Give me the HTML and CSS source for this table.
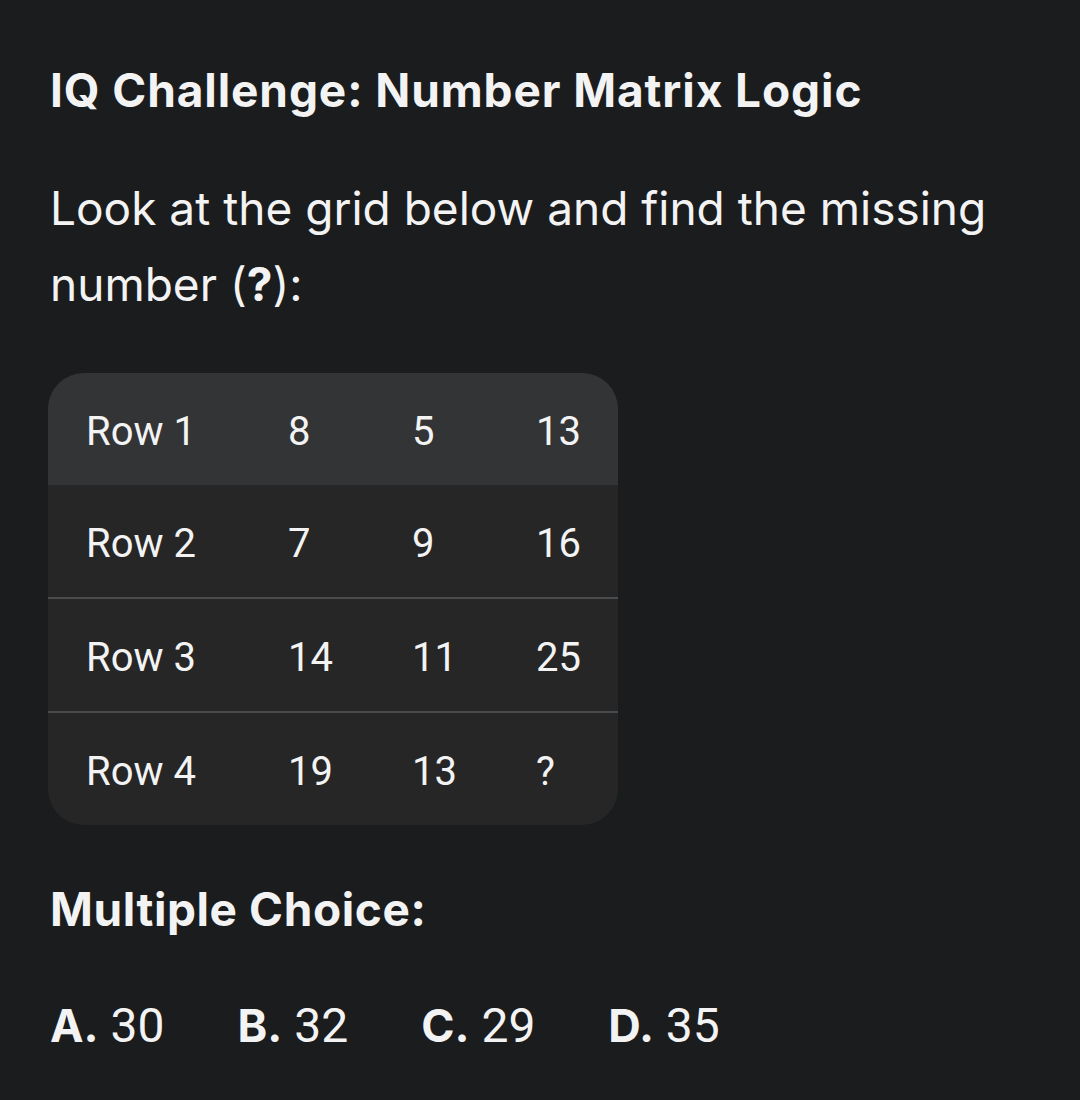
FILE: index.html
```html
<!DOCTYPE html>
<html lang="en">
<head>
  <meta charset="UTF-8" />
  <title>IQ Challenge</title>
  <link rel="stylesheet" href="styles.css">
</head>
<body>

  <h1>IQ Challenge: Number Matrix Logic</h1>

  <p class="intro">Look at the grid below and find the missing number (<strong>?</strong>):</p>

  <div class="grid-wrap">
    <table class="grid">
      <colgroup>
        <col class="c-label">
        <col class="c-num">
        <col class="c-num">
        <col>
      </colgroup>
      <thead>
        <tr><td>Row 1</td><td>8</td><td>5</td><td>13</td></tr>
      </thead>
      <tbody>
        <tr><td>Row 2</td><td>7</td><td>9</td><td>16</td></tr>
        <tr><td>Row 3</td><td>14</td><td>11</td><td>25</td></tr>
        <tr><td>Row 4</td><td>19</td><td>13</td><td>?</td></tr>
      </tbody>
    </table>
  </div>

  <h2>Multiple Choice:</h2>

  <div class="choices">
    <span><b>A.</b> 30</span>
    <span><b>B.</b> 32</span>
    <span><b>C.</b> 29</span>
    <span><b>D.</b> 35</span>
  </div>

</body>
</html>
```

FILE: styles.css
```css
body {
  font-family: Inter, 'Noto Sans', sans-serif;
  margin: 0;
  padding: 58px 50px 0 50px;
  background: #1b1c1e;
  color: #f3f3f3;
}

h1 {
  font-size: 46px;
  font-weight: 700;
  margin: 0 0 48px;
  line-height: 64px;
  letter-spacing: 0.9px;
}

.intro {
  font-size: 46px;
  line-height: 76px;
  margin: 0 0 51px;
  max-width: 980px;
}

.intro strong {
  font-weight: 700;
}

.grid-wrap {
  display: inline-block;
  margin-left: -2px;
  border-radius: 36px;
  overflow: hidden;
  background: #262627;
}

.grid {
  border-collapse: collapse;
  table-layout: fixed;
  width: 570px;
  font-family: Roboto, sans-serif;
  font-size: 40px;
}

.grid .c-label {
  width: 202px;
}

.grid .c-num {
  width: 124px;
}

.grid td {
  height: 106px;
  padding: 6px 0 0 38px;
  vertical-align: middle;
  line-height: 1;
  white-space: nowrap;
}

.grid thead tr {
  background: #333436;
}

.grid tbody tr + tr {
  border-top: 2px solid #4a4b4c;
}

h2 {
  font-size: 46px;
  font-weight: 700;
  margin: 48px 0 0;
  line-height: 64px;
  letter-spacing: 0.6px;
}

.choices {
  display: flex;
  gap: 73px;
  margin-top: 53px;
  line-height: 64px;
}

.choices span {
  font-family: Roboto, sans-serif;
  font-size: 48px;
}

.choices b {
  font-family: Inter, sans-serif;
  font-size: 45px;
  font-weight: 700;
}
```
